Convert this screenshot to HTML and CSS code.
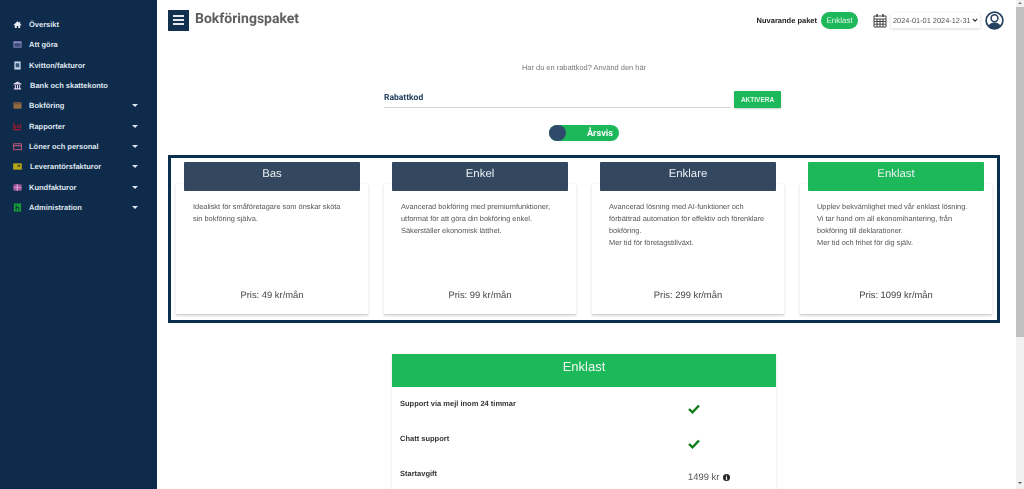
FILE: index.html
```html
<!DOCTYPE html>
<html lang="sv">
<head>
<meta charset="utf-8">
<title>Bokföringspaket</title>
<link rel="stylesheet" href="styles.css">
</head>
<body>
<div class="app">
  <aside class="sidebar">
    <nav class="nav">
      <a class="item i0"><svg class="ic" viewBox="0 0 10 10"><path fill="#e8edf3" d="M5 1.500 0.500 5.500 1.200 6 2 5.400V9h2.200V6.600h1.600V9H8V5.400L8.800 6l.7-.5L8 4.100V2H7v1.200z"/></svg><span>Översikt</span></a>
      <a class="item i1"><svg class="ic" viewBox="0 0 10 10"><rect x="0.500" y="1.500" width="9" height="7" fill="#8f8fc4"/><rect x="1.500" y="3.500" width="7" height="4" fill="#3a4a78"/></svg><span>Att göra</span></a>
      <a class="item i2"><svg class="ic" viewBox="0 0 10 10"><rect x="1.500" y="0.500" width="7" height="9" fill="#c3d4ea"/><rect x="3" y="2.500" width="4" height="4.500" fill="#36557c"/></svg><span>Kvitton/fakturor</span></a>
      <a class="item i3"><svg class="ic" viewBox="0 0 10 10"><path fill="#e3d6ee" d="M5 .5 9.500 3v1H.5V3zM1 8h8v1.500H1zM2 4.500h1.200V8H2zM4.400 4.500h1.200V8H4.400zM6.800 4.500H8V8H6.800z"/></svg><span>Bank och skattekonto</span></a>
      <a class="item i4"><svg class="ic" viewBox="0 0 10 10"><rect x="0.500" y="1.500" width="9" height="7" rx="1" fill="#8f6a45"/><rect x="1" y="2.500" width="8" height="1" fill="#5f4a38"/></svg><span>Bokföring</span><i class="caret"></i></a>
      <a class="item i5"><svg class="ic" viewBox="0 0 10 10"><path fill="none" stroke="#a01c2c" stroke-width="1.400" d="M1 1.500v7h8M3 7V4M5.500 7V3M8 7V2"/></svg><span>Rapporter</span><i class="caret"></i></a>
      <a class="item i6"><svg class="ic" viewBox="0 0 10 10"><rect x="0.700" y="2" width="8.600" height="6.500" fill="none" stroke="#d05a78" stroke-width="1"/><rect x="0.500" y="3.600" width="9" height="1.200" fill="#d05a78"/></svg><span>Löner och personal</span><i class="caret"></i></a>
      <a class="item i7"><svg class="ic" viewBox="0 0 10 10"><rect x="0.200" y="1.500" width="9.600" height="7" fill="#b5a514"/><rect x="5" y="3" width="3" height="2.500" fill="#55581c"/></svg><span>Leverantörsfakturor</span><i class="caret"></i></a>
      <a class="item i8"><svg class="ic" viewBox="0 0 10 10"><rect x="0.500" y="1.500" width="9" height="7" fill="#a8589c"/><path fill="#d49ad0" d="M4 1.500h1.500v7H4zM.5 4.400h9v1H.5z"/></svg><span>Kundfakturor</span><i class="caret"></i></a>
      <a class="item i9"><svg class="ic" viewBox="0 0 10 10"><rect x="1" y="0.500" width="8" height="9" fill="#159a36"/><path fill="none" stroke="#0c2a3e" stroke-width="1" d="M3.500 8V2.500M3.500 5H6.500V8"/></svg><span>Administration</span><i class="caret"></i></a>
    </nav>
  </aside>
  <main class="main">
    <header class="topbar">
      <button class="burger" type="button"><span></span><span></span><span></span></button>
      <h1 class="title">Bokföringspaket</h1>
      <div class="top-right">
        <strong class="current">Nuvarande paket</strong>
        <span class="pill">Enklast</span>
        <svg class="cal" viewBox="0 0 14 14"><path fill="none" stroke="#444" stroke-width="1" d="M1 2.500h12v11H1zM1 5.500h12M1 8h12M1 10.700h12M4 5.500v8M7 5.500v8M10 5.500v8"/><path stroke="#444" stroke-width="1.500" d="M4 .5v3M10 .5v3"/></svg>
        <span class="range">2024-01-01 2024-12-31<svg class="chev" viewBox="0 0 8 5"><path fill="none" stroke="#333" stroke-width="1.500" d="M1 1l3 3 3-3"/></svg></span>
        <svg class="avatar" viewBox="0 0 20 20"><circle cx="10" cy="10" r="8.800" fill="#fff" stroke="#24415f" stroke-width="1.800"/><circle cx="10" cy="7.600" r="3.600" fill="none" stroke="#24415f" stroke-width="1.600"/><path fill="#24415f" d="M3.600 15.500C5 12.600 7.400 12 10 12s5 .6 6.400 3.500C14.800 17.500 12.600 18.500 10 18.500s-4.800-1-6.400-3z"/></svg>
      </div>
    </header>

    <p class="hint">Har du en rabattkod? Använd den här</p>

    <div class="coupon">
      <div class="coupon-field">Rabattkod</div>
      <button class="activate" type="button">AKTIVERA</button>
    </div>

    <div class="toggle-row">
      <div class="toggle"><span class="knob"></span><span class="toggle-label">Årsvis</span></div>
    </div>

    <section class="frame">
      <article class="plan">
        <h2 class="plan-head">Bas</h2>
        <p class="plan-text">Idealiskt för småföretagare som önskar sköta<br>sin bokföring själva.</p>
        <p class="price">Pris: 49 kr/mån</p>
      </article>
      <article class="plan">
        <h2 class="plan-head">Enkel</h2>
        <p class="plan-text">Avancerad bokföring med premiumfunktioner,<br>utformat för att göra din bokföring enkel.<br>Säkerställer ekonomisk lätthet.</p>
        <p class="price">Pris: 99 kr/mån</p>
      </article>
      <article class="plan">
        <h2 class="plan-head">Enklare</h2>
        <p class="plan-text">Avancerad lösning med AI-funktioner och<br>förbättrad automation för effektiv och förenklare<br>bokföring.<br>Mer tid för företagstillväxt.</p>
        <p class="price">Pris: 299 kr/mån</p>
      </article>
      <article class="plan">
        <h2 class="plan-head green">Enklast</h2>
        <p class="plan-text">Upplev bekvämlighet med vår enklast lösning.<br>Vi tar hand om all ekonomihantering, från<br>bokföring till deklarationer.<br>Mer tid och frihet för dig själv.</p>
        <p class="price">Pris: 1099 kr/mån</p>
      </article>
    </section>

    <section class="detail">
      <h2 class="detail-head">Enklast</h2>
      <div class="row"><strong>Support via mejl inom 24 timmar</strong><span class="val"><svg class="check" viewBox="0 0 12 10"><path fill="none" stroke="#0c7d16" stroke-width="2.400" d="M1 5l3.500 3.300L11 1.500"/></svg></span></div>
      <div class="row"><strong>Chatt support</strong><span class="val"><svg class="check" viewBox="0 0 12 10"><path fill="none" stroke="#0c7d16" stroke-width="2.400" d="M1 5l3.500 3.300L11 1.500"/></svg></span></div>
      <div class="row"><strong>Startavgift</strong><span class="val fee">1499 kr <svg class="info" viewBox="0 0 10 10"><circle cx="5" cy="5" r="5" fill="#222"/><path fill="#fff" d="M4.200 2h1.600v1.500H4.200zM3.800 4.200h2v3.300h.6v.8H3.700v-.8h.6V5h-.5z"/></svg></span></div>
    </section>
  </main>
  <div class="scrollbar"><i class="up"></i><b class="thumb"></b><i class="down"></i></div>
</div>
</body>
</html>
```

FILE: styles.css
```css
* { box-sizing: border-box; }
html, body { margin: 0; height: 100%; overflow: hidden; background: #fff; }
body { font-family: "Liberation Sans", Arial, sans-serif; color: #444; text-rendering: geometricPrecision; }
.app { display: flex; height: 489px; overflow: hidden; }

.sidebar { width: 157px; flex: none; background: #0f2b4c; padding-top: 14.500px; }
.nav { display: flex; flex-direction: column; }
.item { display: flex; align-items: center; height: 20.300px; padding-left: 13px; color: #dfe6ee; font-size: 7.500px; font-weight: 700; }
.ic { width: 9px; height: 9px; margin-right: 7px; flex: none; }
.i3 .ic, .i7 .ic { margin-right: 8px; }
.caret { margin-left: auto; margin-right: 19px; width: 0; height: 0; border: 3px solid transparent; border-top: 3px solid #dfe6ee; border-bottom: 0; }

.main { flex: 1; min-width: 0; padding: 0 16px 0 11px; display: flex; flex-direction: column; will-change: transform; }
.topbar { display: flex; align-items: center; height: 40px; flex: none; }
.burger { width: 21px; height: 21px; background: #14304f; border: 0; padding: 0 5px; display: flex; flex-direction: column; justify-content: center; gap: 2px; }
.burger span { display: block; height: 2px; background: #e4e9ef; }
.title { margin: 0 0 2px 6px; font: 700 14px Roboto, sans-serif; color: #5f5f5f; }
.top-right { margin-left: auto; display: flex; align-items: center; padding-right: 4px; }
.current { font-size: 7.500px; color: #222; white-space: nowrap; }
.pill { margin-left: 4px; width: 37px; height: 17px; border-radius: 9px; background: #1cb85a; color: #e6f7ec; font-size: 8px; display: flex; align-items: center; justify-content: center; }
.cal { width: 14px; height: 15px; margin-left: 15px; }
.range { margin-left: 4px; width: 89px; height: 15px; display: flex; align-items: center; justify-content: space-between; font-size: 7.400px; color: #555; padding: 0 2px; box-shadow: 0 1px 3px rgba(0,0,0,.16); white-space: nowrap; }
.chev { width: 6px; height: 4px; }
.avatar { width: 19px; height: 19px; margin-left: 5px; }

.hint { margin: 23px 0 0; text-align: center; font-size: 7.450px; line-height: 10px; color: #777; padding-right: 8px; }
.coupon { display: flex; align-items: flex-end; margin: 17px 0 0 216px; width: 397px; height: 18px; flex: none; }
.coupon-field { flex: 1; height: 17px; border-bottom: 1.500px solid #d2d2d2; font: 700 8.500px Roboto, sans-serif; color: #24405f; line-height: 15px; }
.activate { margin-left: 3px; width: 47px; height: 17px; background: #1cb85a; color: #e6f7ec; border: 0; padding: 0; font: 700 6.500px "Liberation Sans", sans-serif; border-radius: 1px; box-shadow: 0 1px 2px rgba(0,0,0,.2); }
.toggle-row { display: flex; justify-content: center; margin-top: 17px; padding-right: 8px; }
.toggle { position: relative; width: 70px; height: 16px; border-radius: 8px; background: #1cb85a; display: flex; align-items: center; justify-content: flex-end; padding-right: 6px; }
.knob { position: absolute; left: 0; top: 0; width: 17px; height: 16px; border-radius: 50%; background: #2f4a6b; }
.toggle-label { color: #fff; font: 700 9.200px Roboto, sans-serif; }

.frame { display: grid; grid-template-columns: repeat(4, 192px); gap: 16px; margin-top: 14px; width: 832px; height: 168px; border: 3px solid #0b2f4d; padding: 26px 5px 0; flex: none; }
.plan { display: flex; flex-direction: column; align-items: center; height: 131px; box-shadow: 0 1px 3px rgba(0,0,0,.14); background: #fff; border-bottom: 1px solid #c9d6cc; }
.plan-head { margin: -22px 0 0; width: 176px; height: 29px; flex: none; background: #33475f; color: #eef2f6; font-size: 11.400px; font-weight: 400; text-align: center; line-height: 25px; border-radius: 1px; }
.plan-head.green { background: #1cb85a; }
.plan-text { margin: 10px 0 0; width: 176px; padding-left: 9px; font-size: 7.400px; line-height: 12px; color: #555; flex: 1; }
.price { margin: 0 0 12px; font-size: 9.400px; line-height: 14px; color: #444; }

.detail { margin: 31px 0 0 224px; width: 384px; box-shadow: 0 0 3px rgba(0,0,0,.1); flex: none; }
.detail-head { margin: 0; height: 33px; background: #1cb85a; color: #f0faf3; font-size: 13px; font-weight: 400; text-align: center; line-height: 26px; }
.row { display: flex; height: 35px; padding: 12px 0 0 8px; font-size: 7.500px; color: #333; }
.row strong { width: 288px; }
.val { display: block; padding-top: 5px; }
.check { display: block; width: 12px; height: 10px; }
.fee { font-size: 9.400px; line-height: 12px; color: #555; padding-top: 2px; }
.info { width: 7px; height: 7px; vertical-align: -1px; margin-left: 1px; }

.scrollbar { position: fixed; top: 0; right: 0; width: 8px; height: 489px; background: #f1f1f1; }
.up { position: absolute; left: 2px; top: 2px; width: 0; height: 0; border: 2px solid transparent; border-bottom: 2px solid #777; border-top: 0; }
.thumb { position: absolute; left: 0; top: 7px; width: 8px; height: 330px; background: #c0c0c0; }
.down { position: absolute; left: 2px; bottom: 5px; width: 0; height: 0; border: 2px solid transparent; border-top: 2px solid #555; border-bottom: 0; }
```
